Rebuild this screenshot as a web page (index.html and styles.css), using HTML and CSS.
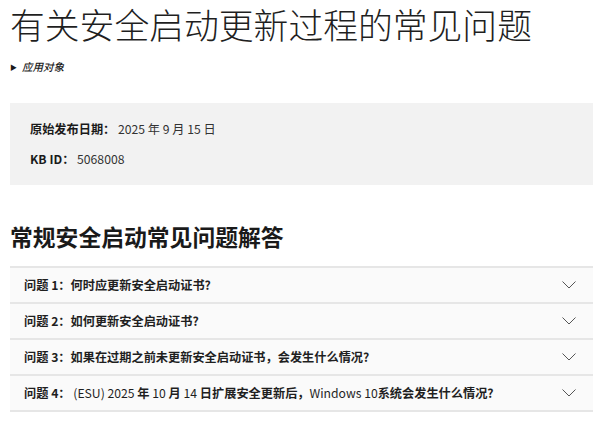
FILE: index.html
```html
<!DOCTYPE html>
<html lang="zh-CN">
<head>
<meta charset="utf-8">
<link rel="stylesheet" href="styles.css">
</head>
<body>
<main class="page">
  <h1 class="title">有关安全启动更新过程的常见问题</h1>
  <div class="applies"><span class="tri">&#9654;</span><em>应用对象</em></div>
  <section class="meta">
    <p><b>原始发布日期：</b> 2025 年 9 月 15 日</p>
    <p><b>KB ID：</b> 5068008</p>
  </section>
  <h2 class="heading">常规安全启动常见问题解答</h2>
  <div class="faq">
    <div class="row"><span class="q">问题 1：何时应更新安全启动证书?</span><svg class="chev" viewBox="0 0 14 8"><path d="M0.5 0.5 L7 7 L13.5 0.5" /></svg></div>
    <div class="row"><span class="q">问题 2：如何更新安全启动证书?</span><svg class="chev" viewBox="0 0 14 8"><path d="M0.5 0.5 L7 7 L13.5 0.5" /></svg></div>
    <div class="row"><span class="q">问题 3：如果在过期之前未更新安全启动证书，会发生什么情况?</span><svg class="chev" viewBox="0 0 14 8"><path d="M0.5 0.5 L7 7 L13.5 0.5" /></svg></div>
    <div class="row"><span class="q">问题 4： <span class="n">(ESU) 2025</span> 年 <span class="n">10</span> 月 <span class="n">14</span> 日扩展安全更新后，<span class="n">Windows 10</span>系统会发生什么情况?</span><svg class="chev" viewBox="0 0 14 8"><path d="M0.5 0.5 L7 7 L13.5 0.5" /></svg></div>
  </div>
</main>
</body>
</html>
```
FILE: styles.css
```css
* { box-sizing: border-box; }
html, body { margin: 0; padding: 0; background: #fff; }
body {
  font-family: "Segoe UI", "Noto Sans CJK SC", "Noto Sans", sans-serif;
  color: #262626;
}
.page { width: 583px; margin-left: 10px; }
.title {
  margin: 0;
  padding-top: 4px;
  font-size: 34.8px;
  line-height: 40px;
  font-weight: 300;
  color: #1f1f1f;
  letter-spacing: 0;
  white-space: nowrap;
}
.applies {
  margin-top: 16px;
  font-size: 10.5px;
  line-height: 14px;
  display: flex;
  align-items: center;
  gap: 5px;
  color: #1a1a1a;
}
.applies em { font-style: italic; font-weight: 500; }
.tri { font-size: 7px; }
.meta {
  margin-top: 29px;
  background: #f2f2f2;
  height: 82px;
  padding: 18px 20px 0 20px;
  font-size: 12.2px;
}
.meta p { margin: 0; line-height: 16px; height: 30px; color: #333; }
.meta b { font-weight: 700; color: #1a1a1a; }
.heading {
  margin: 38px 0 0 0;
  font-size: 22.8px;
  line-height: 28px;
  font-weight: 700;
  color: #1a1a1a;
}
.faq { margin-top: 15px; border-top: 2px solid #e6e6e6; }
.row {
  height: 36px;
  background: #fafafa;
  border-bottom: 2px solid #e6e6e6;
  display: flex;
  align-items: center;
  justify-content: space-between;
  padding: 0 17px 0 14px;
  font-size: 12.2px;
  font-weight: 700;
  color: #1f1f1f;
}
.row .n { font-weight: 400; }
.chev { width: 14px; height: 8px; }
.chev path { fill: none; stroke: #555; stroke-width: 1; }
```
